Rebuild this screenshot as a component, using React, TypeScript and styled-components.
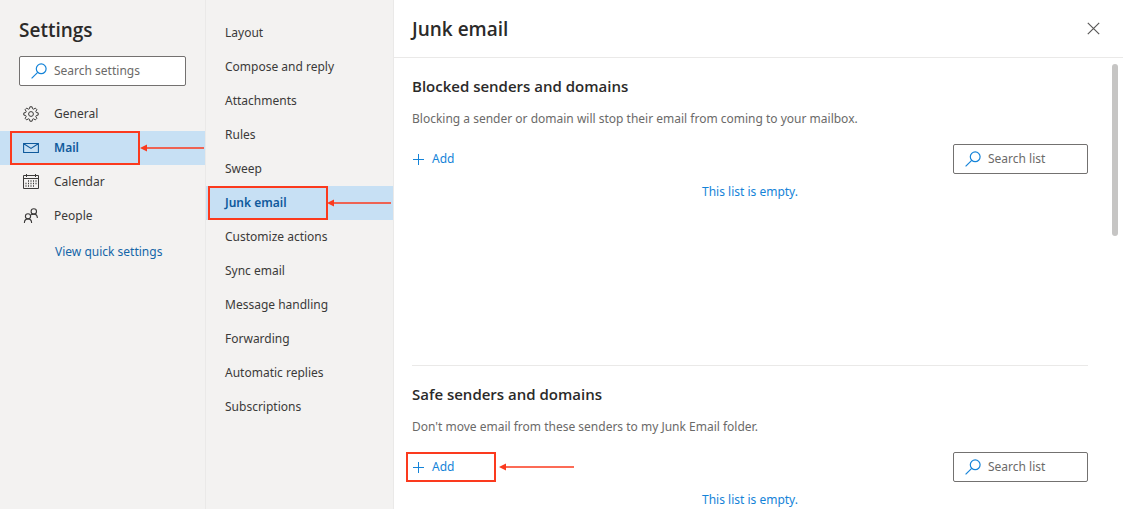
import React from 'react';
import styled, { createGlobalStyle, css } from 'styled-components';

const colors = {
  panel: '#f3f2f1',
  line: '#eae9e8',
  selected: '#c7e0f4',
  text: '#3b3a39',
  heading: '#2b2a29',
  muted: '#6b6a69',
  accent: '#1483d8',
  link: '#1466a8',
  selectedText: '#0f5a9c',
  callout: '#fb3a1e',
};

const GlobalStyle = createGlobalStyle`
  * { box-sizing: border-box; }
  body {
    margin: 0;
    background: #fff;
    color: ${colors.text};
    font-family: "Noto Sans", "Open Sans", sans-serif;
    font-size: 12px;
    line-height: 20px;
  }
  h1, h2, p, ul { margin: 0; padding: 0; }
  ul { list-style: none; }
  button { font: inherit; border: 0; background: none; padding: 0; cursor: pointer; }
`;

const Page = styled.div`
  display: flex;
  height: 100vh;
  overflow: hidden;
`;

const SettingsPane = styled.aside`
  flex: none;
  width: 206px;
  padding-top: 16px;
  background: ${colors.panel};
  border-right: 1px solid ${colors.line};
`;

const CategoryPane = styled.nav`
  flex: none;
  width: 187px;
  padding-top: 16px;
  background: ${colors.panel};
`;

const Title = styled.h1`
  font-family: "Open Sans", "Noto Sans", sans-serif;
  font-size: 19px;
  line-height: 28px;
  font-weight: 600;
  color: ${colors.heading};
`;

const PaneHeader = styled.div`
  display: flex;
  flex-direction: column;
  gap: 12px;
  padding: 0 19px 11px;
`;

const SearchBox = styled.label<{ $width?: number }>`
  display: flex;
  align-items: center;
  gap: 7px;
  width: ${(p) => (p.$width ? `${p.$width}px` : '100%')};
  height: 30px;
  padding: 0 11px;
  background: #fff;
  border: 1px solid #737170;
  border-radius: 2px;
`;

const SearchInput = styled.input`
  flex: 1;
  min-width: 0;
  padding: 0;
  border: 0;
  outline: 0;
  background: none;
  font: inherit;
  color: ${colors.text};
  &::placeholder { color: ${colors.muted}; opacity: 1; }
`;

const NavRow = styled.li`
  position: relative;
`;

const NavLink = styled.a<{ $selected?: boolean; $inset: number }>`
  display: flex;
  align-items: center;
  gap: 15px;
  height: 34px;
  padding-left: ${(p) => p.$inset}px;
  color: ${colors.text};
  text-decoration: none;
  ${(p) =>
    p.$selected &&
    css`
      background: ${colors.selected};
      color: ${colors.selectedText};
      font-weight: 600;
    `}
`;

const QuickLink = styled.a`
  display: block;
  margin: 9px 0 0 55px;
  color: ${colors.link};
  text-decoration: none;
`;

const Main = styled.main`
  position: relative;
  flex: 1;
  min-width: 0;
  border-left: 1px solid ${colors.line};
`;

const MainHeader = styled.header`
  display: flex;
  align-items: center;
  justify-content: space-between;
  height: 58px;
  padding: 0 23px 0 18px;
  border-bottom: 1px solid ${colors.line};
`;

const CloseButton = styled.button`
  display: flex;
  color: #5a5958;
`;

const Content = styled.div`
  padding: 0 35px 0 18px;
`;

const Section = styled.section`
  padding-top: 16px;
  & + & { border-top: 1px solid ${colors.line}; }
`;

const SectionTitle = styled.h2`
  margin-bottom: 11px;
  font-family: "Open Sans", "Noto Sans", sans-serif;
  font-size: 15px;
  line-height: 24px;
  font-weight: 600;
  color: ${colors.heading};
`;

const Description = styled.p`
  margin-bottom: 15px;
  color: ${colors.muted};
`;

const Toolbar = styled.div`
  display: flex;
  align-items: center;
  justify-content: space-between;
  margin-bottom: 8px;
`;

const AddSlot = styled.div`
  position: relative;
`;

const AddButton = styled.button`
  display: flex;
  align-items: center;
  gap: 7px;
  height: 30px;
  color: ${colors.accent};
`;

const EmptyList = styled.p`
  min-height: 183px;
  text-align: center;
  color: ${colors.accent};
`;

const ScrollThumb = styled.div`
  position: absolute;
  top: 64px;
  right: 5px;
  width: 6px;
  height: 172px;
  border-radius: 3px;
  background: #c6c5c4;
`;

const Callout = styled.span<{ $left: number; $width: number }>`
  position: absolute;
  top: 0;
  bottom: 0;
  left: ${(p) => p.$left}px;
  width: ${(p) => p.$width}px;
  border: 2px solid ${colors.callout};
  pointer-events: none;
`;

const ArrowSvg = styled.svg<{ $left: number }>`
  position: absolute;
  top: 50%;
  left: ${(p) => p.$left}px;
  margin-top: -4px;
  color: ${colors.callout};
  pointer-events: none;
`;

const Arrow = ({ left, length }: { left: number; length: number }) => (
  <ArrowSvg $left={left} width={length} height="8" viewBox={`0 0 ${length} 8`} aria-hidden="true">
    <path d="M0 4 7 .5v7z" fill="currentColor" />
    <path d={`M6 4H${length}`} stroke="currentColor" strokeWidth="1.7" />
  </ArrowSvg>
);

const SearchIcon = () => (
  <svg width="16" height="16" viewBox="0 0 16 16" fill="none" stroke={colors.accent} strokeWidth="1.2" aria-hidden="true">
    <circle cx="10.2" cy="5.8" r="4.9" />
    <path d="M6.7 9.3.6 15.4" />
  </svg>
);

const iconProps = {
  width: 16,
  height: 16,
  viewBox: '0 0 16 16',
  fill: 'none',
  stroke: 'currentColor',
  'aria-hidden': true,
} as const;

const GearIcon = () => (
  <svg {...iconProps} strokeWidth="1" strokeLinejoin="round">
    <path d="M6.9.8h2.2l.4 1.9 1.2.5 1.6-1.1 1.6 1.6-1.1 1.6.5 1.2 1.9.4v2.2l-1.9.4-.5 1.2 1.1 1.6-1.6 1.6-1.6-1.1-1.2.5-.4 1.9H6.9l-.4-1.9-1.2-.5-1.6 1.1-1.6-1.6 1.1-1.6-.5-1.2L.8 9.1V6.9l1.9-.4.5-1.2-1.1-1.6 1.6-1.6 1.6 1.1 1.2-.5z" />
    <circle cx="8" cy="8" r="2.4" />
  </svg>
);

const MailIcon = () => (
  <svg {...iconProps} strokeWidth="1.1">
    <path d="M.6 3.5h14.8v9H.6zM.8 3.8 8 8.4l7.2-4.6" />
  </svg>
);

const CalendarIcon = () => (
  <svg {...iconProps} strokeWidth="1">
    <path d="M.5 1.5h15v13H.5zM.5 4.5h15M3.5 0v3M12.500 0v3" />
    <path d="M5 7h8.500M2.500 9.500h11M2.500 12h8.500" strokeWidth="1.500" strokeDasharray="1 1.500" />
  </svg>
);

const PeopleIcon = () => (
  <svg {...iconProps} strokeWidth="1.1">
    <circle cx="10.800" cy="3.400" r="2.700" />
    <circle cx="5" cy="8.300" r="2.600" />
    <path d="M1.400 15c0-2.500 1.500-4.100 3.600-4.100S8.600 12.500 8.600 15M8 6.900c.7-.6 1.700-.8 2.800-.8 2.100 0 3.500 1.500 3.600 3.900" />
  </svg>
);

const PlusIcon = () => (
  <svg width="13" height="13" viewBox="0 0 13 13" stroke="currentColor" strokeWidth="1" aria-hidden="true">
    <path d="M6.500 1v11M1 6.500h11" />
  </svg>
);

const CloseIcon = () => (
  <svg width="13" height="13" viewBox="0 0 13 13" stroke="currentColor" strokeWidth="1.200" aria-hidden="true">
    <path d="m.8.8 11.400 11.400M12.200.8.8 12.200" />
  </svg>
);

const areas = [
  { name: 'General', Icon: GearIcon },
  { name: 'Mail', Icon: MailIcon },
  { name: 'Calendar', Icon: CalendarIcon },
  { name: 'People', Icon: PeopleIcon },
];

const categories = [
  'Layout',
  'Compose and reply',
  'Attachments',
  'Rules',
  'Sweep',
  'Junk email',
  'Customize actions',
  'Sync email',
  'Message handling',
  'Forwarding',
  'Automatic replies',
  'Subscriptions',
];

type SenderListProps = { title: string; description: string; highlighted?: boolean };

const SenderList = ({ title, description, highlighted }: SenderListProps) => (
  <Section>
    <SectionTitle>{title}</SectionTitle>
    <Description>{description}</Description>
    <Toolbar>
      <AddSlot>
        <AddButton type="button">
          <PlusIcon />
          Add
        </AddButton>
        {highlighted && (
          <>
            <Callout $left={-6} $width={90} />
            <Arrow left={87} length={75} />
          </>
        )}
      </AddSlot>
      <SearchBox $width={135}>
        <SearchIcon />
        <SearchInput type="text" placeholder="Search list" aria-label={`Search list: ${title}`} />
      </SearchBox>
    </Toolbar>
    <EmptyList>This list is empty.</EmptyList>
  </Section>
);

export default function App() {
  return (
    <Page>
      <GlobalStyle />
      <SettingsPane>
        <PaneHeader>
          <Title>Settings</Title>
          <SearchBox>
            <SearchIcon />
            <SearchInput type="text" placeholder="Search settings" aria-label="Search settings" />
          </SearchBox>
        </PaneHeader>
        <nav>
          <ul>
            {areas.map(({ name, Icon }) => (
              <NavRow key={name}>
                <NavLink href="#" $inset={23} $selected={name === 'Mail'}>
                  <Icon />
                  {name}
                </NavLink>
                {name === 'Mail' && (
                  <>
                    <Callout $left={10} $width={130} />
                    <Arrow left={140} length={64} />
                  </>
                )}
              </NavRow>
            ))}
          </ul>
          <QuickLink href="#">View quick settings</QuickLink>
        </nav>
      </SettingsPane>
      <CategoryPane>
        <ul>
          {categories.map((name) => (
            <NavRow key={name}>
              <NavLink href="#" $inset={19} $selected={name === 'Junk email'}>
                {name}
              </NavLink>
              {name === 'Junk email' && (
                <>
                  <Callout $left={2} $width={120} />
                  <Arrow left={121} length={64} />
                </>
              )}
            </NavRow>
          ))}
        </ul>
      </CategoryPane>
      <Main>
        <MainHeader>
          <Title as="h2">Junk email</Title>
          <CloseButton type="button" aria-label="Close">
            <CloseIcon />
          </CloseButton>
        </MainHeader>
        <Content>
          <SenderList
            title="Blocked senders and domains"
            description="Blocking a sender or domain will stop their email from coming to your mailbox."
          />
          <SenderList
            title="Safe senders and domains"
            description="Don't move email from these senders to my Junk Email folder."
            highlighted
          />
        </Content>
        <ScrollThumb />
      </Main>
    </Page>
  );
}
